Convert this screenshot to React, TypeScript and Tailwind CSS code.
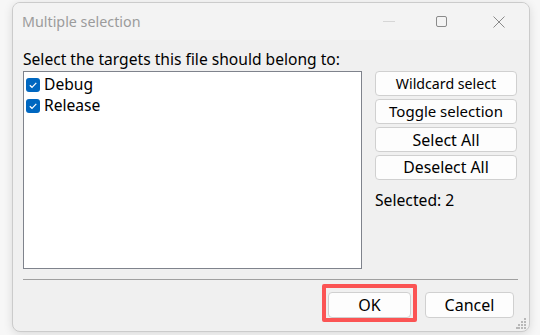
import React from "react";

const font = { fontFamily: '"Segoe UI", "Noto Sans", "Open Sans", sans-serif' };

const Check = ({ label }: { label: string }) => {
  return (
    <div className="flex items-center h-[21px] gap-[4px]">
      <div className="w-[14px] h-[14px] rounded-[3px] bg-[#0067c0] flex items-center justify-center">
        <svg width="10" height="10" viewBox="0 0 10 10">
          <path d="M1.8 5.2 L4 7.3 L8.3 2.8" fill="none" stroke="white" strokeWidth="1.2" />
        </svg>
      </div>
      <span className="text-[15.6px] text-black leading-none">{label}</span>
    </div>
  );
};

const Btn = ({ label, className }: { label: string; className?: string }) => {
  return (
    <div
      className={
        "flex items-center justify-center bg-[#fdfdfd] border border-[#d0d0d0] rounded-[4px] text-black " +
        (className || "")
      }
    >
      {label}
    </div>
  );
};

const App = () => {
  return (
    <div className="w-[540px] h-[335px] bg-[#f7f7f7] pl-[12px] pt-[2px]" style={font}>
      <div className="w-[518px] h-[330px] rounded-[8px] border border-[#cbcbcb] bg-[#f0f0f0] shadow-[0_2px_10px_rgba(0,0,0,0.12)] flex flex-col overflow-hidden relative">
        {/* title bar */}
        <div className="h-[37px] bg-[#f3f3f3] flex items-center pl-[9px]">
          <span className="text-[14.3px] text-[#9b9b9b] flex-1">Multiple selection</span>
          <div className="flex items-center">
            <div className="w-[46px] flex justify-center">
              <div className="w-[12px] h-px bg-[#d6d6d6]" />
            </div>
            <div className="w-[58px] flex justify-center">
              <div className="w-[11px] h-[11px] border border-[#8a8a8a] rounded-[2px]" />
            </div>
            <div className="w-[58px] flex justify-center mr-[1px]">
              <svg width="12" height="12" viewBox="0 0 12 12">
                <path d="M0.5 0.5 L11.5 11.5 M11.5 0.5 L0.5 11.5" stroke="#8a8a8a" strokeWidth="1" />
              </svg>
            </div>
          </div>
        </div>

        {/* body */}
        <div className="flex-1 flex flex-col px-[10px] pt-[9px]">
          <div className="text-[15.6px] text-black leading-[20px]">Select the targets this file should belong to:</div>
          <div className="flex mt-[2px] gap-[13px]">
            <div className="w-[339px] h-[198px] bg-white border border-[#7f838c] pl-[2px] pt-[2px]">
              <Check label="Debug" />
              <Check label="Release" />
            </div>
            <div className="flex flex-col gap-[3px] w-[142px]">
              <Btn label="Wildcard select" className="h-[25px] text-[14.2px]" />
              <Btn label="Toggle selection" className="h-[25px] text-[15px]" />
              <Btn label="Select All" className="h-[25px] text-[16px]" />
              <Btn label="Deselect All" className="h-[25px] text-[15.8px]" />
              <div className="text-[15.7px] text-black mt-[7px] leading-[20px]">Selected: 2</div>
            </div>
          </div>
          <div className="h-px bg-[#a0a0a0] mt-[10px] w-[495px]" />
          <div className="flex justify-end gap-[14px] mt-[12px] pr-[5px]">
            <div className="relative">
              <Btn label="OK" className="w-[83px] h-[26px] text-[16px]" />
              <div className="absolute left-[-6px] top-[-8px] w-[95px] h-[38px] border-[4px] border-[#fb5454] rounded-[2px]" />
            </div>
            <Btn label="Cancel" className="w-[89px] h-[26px] text-[16px]" />
          </div>
        </div>

        {/* resize grip */}
        <svg className="absolute right-[2px] bottom-[2px]" width="11" height="11" viewBox="0 0 11 11">
          <g fill="#b8b8b8">
            <rect x="8" y="0" width="2" height="2" />
            <rect x="5" y="3" width="2" height="2" />
            <rect x="8" y="3" width="2" height="2" />
            <rect x="2" y="6" width="2" height="2" />
            <rect x="5" y="6" width="2" height="2" />
            <rect x="8" y="6" width="2" height="2" />
            <rect x="0" y="9" width="2" height="2" />
            <rect x="2" y="9" width="2" height="2" />
            <rect x="5" y="9" width="2" height="2" />
            <rect x="8" y="9" width="2" height="2" />
          </g>
        </svg>
      </div>
    </div>
  );
};

export default App;
